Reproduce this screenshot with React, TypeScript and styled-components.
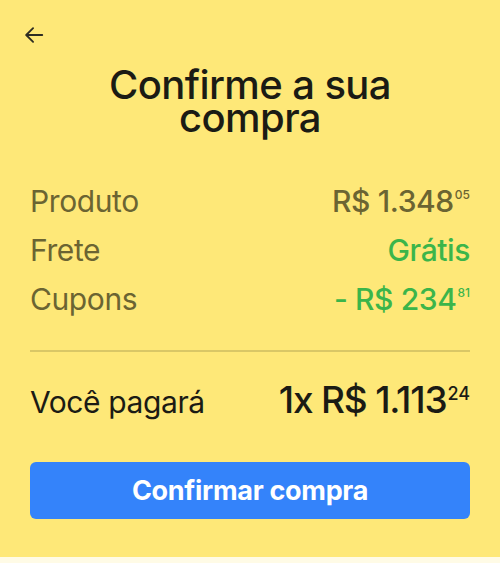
import styled, { createGlobalStyle } from "styled-components";

const GlobalStyle = createGlobalStyle`
  html, body {
    margin: 0;
    padding: 0;
    background: #fffbe6;
  }
  body {
    font-family: "Inter", "Open Sans", sans-serif;
  }
`;

const Screen = styled.div`
  width: 500px;
  height: 557px;
  background: #fee878;
  box-sizing: border-box;
  padding: 23px 30px 0;
  display: flex;
  flex-direction: column;
`;

const BackButton = styled.button`
  width: 24px;
  height: 24px;
  padding: 0;
  margin-left: -8px;
  border: none;
  background: none;
  color: #2e2d22;
  display: flex;
  align-items: center;
  justify-content: center;
  cursor: pointer;
`;

const Title = styled.h1`
  margin: 21px 0 0;
  text-align: center;
  font-family: "Inter", sans-serif;
  font-weight: 500;
  font-size: 40px;
  line-height: 33px;
  color: #1b1b14;
  letter-spacing: -0.6px;
`;

const Summary = styled.div`
  margin-top: 43px;
  display: flex;
  flex-direction: column;
`;

const Row = styled.div`
  display: flex;
  justify-content: space-between;
  align-items: baseline;
  font-size: 30px;
  line-height: 49px;
  letter-spacing: -0.4px;
`;

const Label = styled.span`
  color: #6b6432;
`;

const Value = styled.span<{ $tone?: "muted" | "green" }>`
  color: ${(p) => (p.$tone === "green" ? "#3bb54a" : "#6b6432")};
  font-weight: 500;
  white-space: nowrap;
`;

const Cents = styled.span<{ $size: number; $raise: number }>`
  font-size: ${(p) => p.$size}px;
  vertical-align: ${(p) => p.$raise}px;
  line-height: 1;
  letter-spacing: 0;
  margin-left: 1px;
`;

const Divider = styled.hr`
  margin: 26px 0 0;
  border: none;
  height: 2px;
  background: #d9c766;
`;

const TotalRow = styled.div`
  margin-top: 26px;
  height: 48px;
  display: flex;
  justify-content: space-between;
  align-items: baseline;
  line-height: 44px;
  color: #1b1b14;
`;

const TotalLabel = styled.span`
  font-size: 30px;
  letter-spacing: -0.4px;
`;

const TotalValue = styled.span`
  font-size: 37px;
  font-weight: 500;
  letter-spacing: -1.2px;
  white-space: nowrap;
`;

const ConfirmButton = styled.button`
  margin-top: 36px;
  height: 57px;
  border: none;
  border-radius: 6px;
  background: #3483fa;
  color: #fff;
  font-family: "Inter", sans-serif;
  font-size: 27px;
  font-weight: 700;
  letter-spacing: -0.3px;
  cursor: pointer;
`;

export default function App() {
  return (
    <>
      <GlobalStyle />
      <Screen>
        <BackButton aria-label="Voltar">
          <svg width="22" height="22" viewBox="0 0 24 24" fill="none" stroke="currentColor" strokeWidth="2" strokeLinecap="round" strokeLinejoin="round">
            <path d="M21 12H4" />
            <path d="M11 4.5L3.5 12l7.5 7.5" />
          </svg>
        </BackButton>
        <Title>
          Confirme a sua
          <br />
          compra
        </Title>
        <Summary>
          <Row>
            <Label>Produto</Label>
            <Value $tone="muted">
              R$ 1.348<Cents $size={12} $raise={13}>05</Cents>
            </Value>
          </Row>
          <Row>
            <Label>Frete</Label>
            <Value $tone="green">Grátis</Value>
          </Row>
          <Row>
            <Label>Cupons</Label>
            <Value $tone="green">
              - R$ 234<Cents $size={12} $raise={13}>81</Cents>
            </Value>
          </Row>
        </Summary>
        <Divider />
        <TotalRow>
          <TotalLabel>Você pagará</TotalLabel>
          <TotalValue>
            1x R$ 1.113<Cents $size={18} $raise={13}>24</Cents>
          </TotalValue>
        </TotalRow>
        <ConfirmButton>Confirmar compra</ConfirmButton>
      </Screen>
    </>
  );
}
